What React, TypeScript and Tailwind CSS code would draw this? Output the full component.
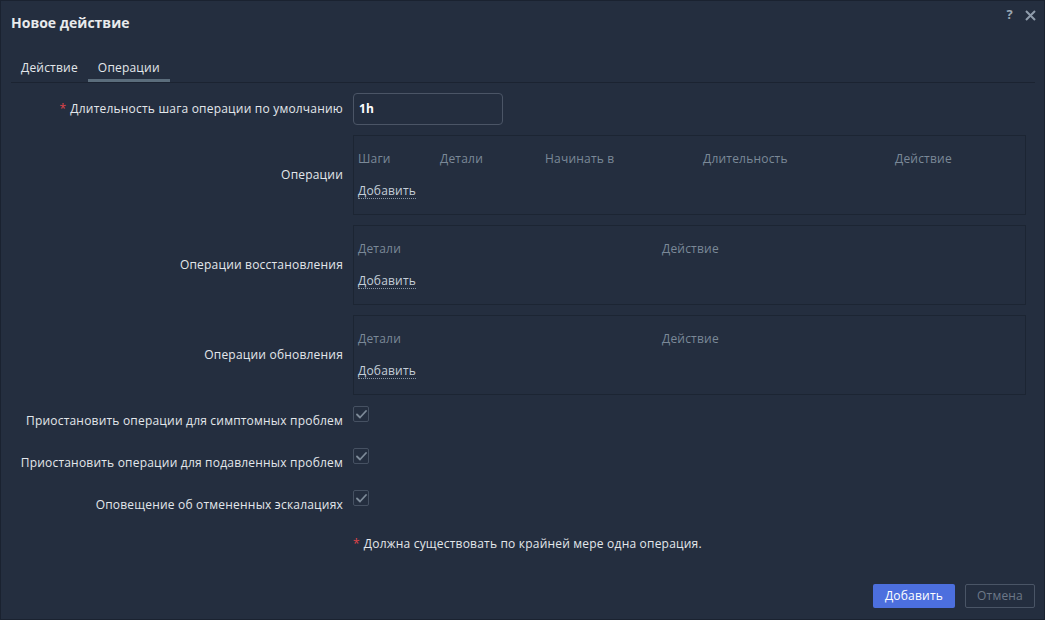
import React from "react";

const font = { fontFamily: '"Open Sans", "Liberation Sans", Arial, sans-serif' };

function Check() {
  return (
    <div className="w-4 h-4 rounded-[2px] border border-[#465162] flex items-center justify-center">
      <svg width="11" height="9" viewBox="0 0 11 9" fill="none">
        <path d="M1 4.5 L4 7.5 L10 1" stroke="#7d8a98" strokeWidth="1.8" strokeLinecap="round" strokeLinejoin="round" />
      </svg>
    </div>
  );
}

function AddLink() {
  return (
    <span className="text-[12px] text-[#c5cfd9] border-b border-dotted border-[#8a98a6] leading-[14px]">Добавить</span>
  );
}

function OpBox({ cols }: { cols: { t: string; w?: string }[] }) {
  return (
    <div className="w-[673px] h-[80px] border border-[#1c2533] pl-[4px] pt-[15px]">
      <div className="flex h-[16px] items-center text-[12px] text-[#7b8998]">
        {cols.map((c, i) => (
          <div key={i} className={c.w ?? ""}>{c.t}</div>
        ))}
      </div>
      <div className="mt-[16px] h-[16px] flex items-center">
        <AddLink />
      </div>
    </div>
  );
}

export default function App() {
  return (
    <div style={font} className="w-[1045px] h-[620px] bg-[#242e3f] border border-[#1a2230] text-[#e3e7eb] relative overflow-hidden tracking-[0.2px]">
      {/* header */}
      <div className="h-[42px] flex items-center pl-[10px] pr-[8px]">
        <div className="text-[14px] font-bold text-[#e8eaec] tracking-normal">Новое действие</div>
        <div className="ml-auto flex items-center gap-[12px] -mt-[14px]">
          <span className="text-[13px] font-bold text-[#9aa7b4]">?</span>
          <svg width="11" height="11" viewBox="0 0 11 11">
            <path d="M1 1 L10 10 M10 1 L1 10" stroke="#8f9cab" strokeWidth="2" />
          </svg>
        </div>
      </div>
      {/* tabs */}
      <div className="mt-[10px] ml-[10px] mr-[9px] border-b border-[#1b2331] flex h-[30px]">
        <div className="px-[10px] text-[12px] text-[#e3e7eb] flex items-center">Действие</div>
        <div className="px-[10px] text-[12px] text-[#e3e7eb] flex items-center border-b-[3px] border-[#5b6d7c] pt-[3px]">Операции</div>
      </div>
      {/* form */}
      <div className="mt-[10px] flex flex-col text-[12px]">
        <div className="flex items-center h-[32px]">
          <div className="w-[342px] text-right pr-0">
            <span className="text-[#e0454a] mr-[4px]">*</span>Длительность шага операции по умолчанию
          </div>
          <div className="ml-[10px] w-[150px] h-[32px] rounded-[4px] border border-[#4b5566] flex items-center pl-[5px] font-bold text-white">1h</div>
        </div>
        <div className="flex items-center mt-[10px]">
          <div className="w-[342px] text-right">Операции</div>
          <div className="ml-[10px]">
            <OpBox cols={[{ t: "Шаги", w: "w-[82px]" }, { t: "Детали", w: "w-[105px]" }, { t: "Начинать в", w: "w-[158px]" }, { t: "Длительность", w: "w-[192px]" }, { t: "Действие" }]} />
          </div>
        </div>
        <div className="flex items-center mt-[10px]">
          <div className="w-[342px] text-right">Операции восстановления</div>
          <div className="ml-[10px]">
            <OpBox cols={[{ t: "Детали", w: "w-[304px]" }, { t: "Действие" }]} />
          </div>
        </div>
        <div className="flex items-center mt-[10px]">
          <div className="w-[342px] text-right">Операции обновления</div>
          <div className="ml-[10px]">
            <OpBox cols={[{ t: "Детали", w: "w-[304px]" }, { t: "Действие" }]} />
          </div>
        </div>
        {[
          "Приостановить операции для симптомных проблем",
          "Приостановить операции для подавленных проблем",
          "Оповещение об отмененных эскалациях",
        ].map((t, i) => (
          <div key={i} className={`flex items-start h-[42px] ${i === 0 ? "mt-[10px]" : ""}`}>
            <div className="w-[342px] text-right pt-[8px] leading-[16px]">{t}</div>
            <div className="ml-[10px] pt-[1px]">
              <Check />
            </div>
          </div>
        ))}
        <div className="flex mt-[5px]">
          <div className="w-[342px]" />
          <div className="ml-[10px] leading-[16px]">
            <span className="text-[#e0454a] mr-[4px]">*</span>Должна существовать по крайней мере одна операция.
          </div>
        </div>
      </div>
      {/* footer */}
      <div className="absolute right-[9px] bottom-[11px] flex gap-[10px] text-[12px]">
        <div className="w-[82px] h-[24px] rounded-[2px] bg-[#4c6fde] text-white flex items-center justify-center">Добавить</div>
        <div className="w-[70px] h-[24px] rounded-[2px] border border-[#4a5566] text-[#6c7888] flex items-center justify-center">Отмена</div>
      </div>
    </div>
  );
}
